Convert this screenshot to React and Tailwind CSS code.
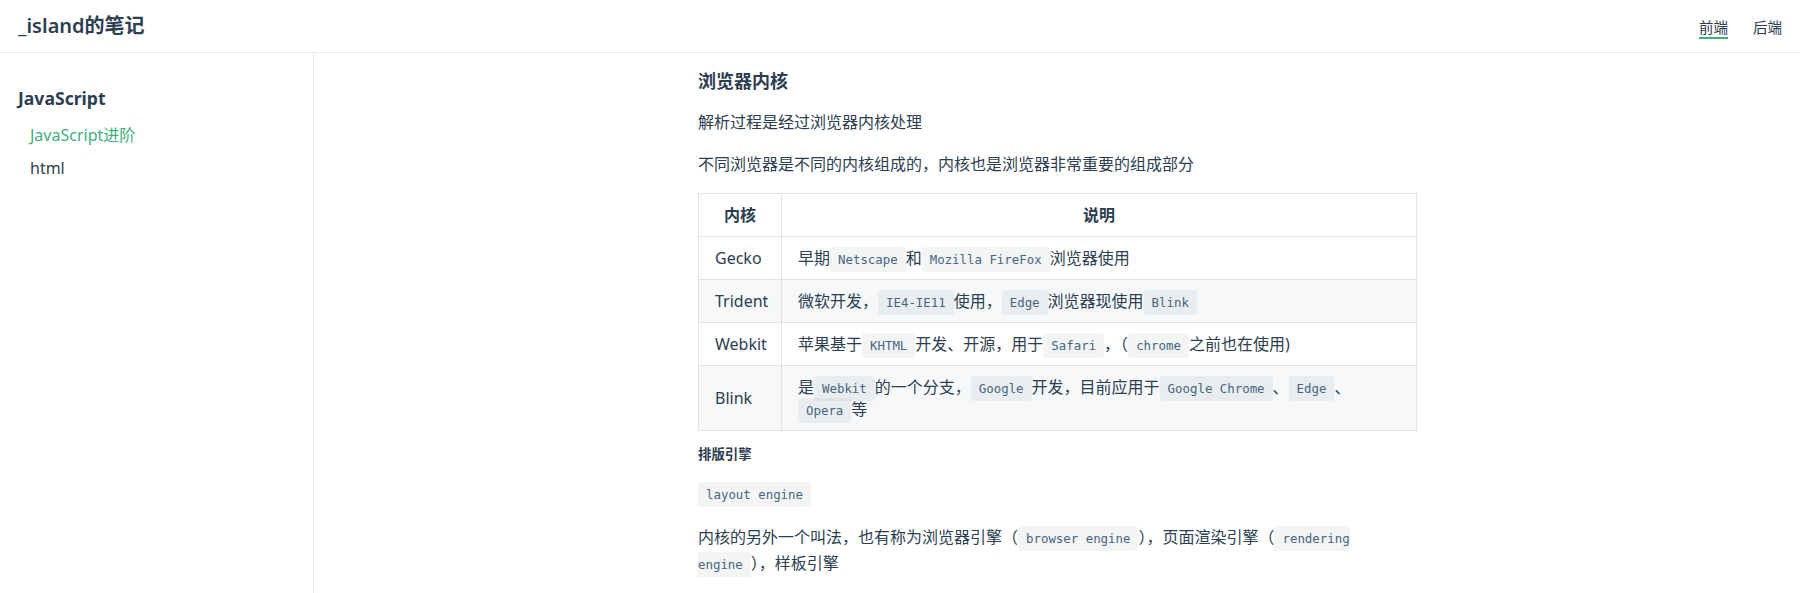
const Code = ({ children, className = "" }) => (
  <code
    className={`font-['DejaVu_Sans_Mono',monospace] text-[12.4px] leading-none text-[#476582] bg-[rgba(27,31,35,0.05)] rounded-[3px] px-[8px] py-[5px] ${className}`}
  >
    {children}
  </code>
);

const rows = [
  {
    name: "Gecko",
    desc: (
      <>
        早期<Code>Netscape</Code>和<Code>Mozilla FireFox</Code>浏览器使用
      </>
    ),
  },
  {
    name: "Trident",
    desc: (
      <>
        微软开发，<Code>IE4-IE11</Code>使用，<Code>Edge</Code>浏览器现使用<Code>Blink</Code>
      </>
    ),
  },
  {
    name: "Webkit",
    desc: (
      <>
        苹果基于<Code>KHTML</Code>开发、开源，用于<Code>Safari</Code>，（<Code>chrome</Code>之前也在使用)
      </>
    ),
  },
  {
    name: "Blink",
    desc: (
      <>
        是<Code>Webkit</Code>的一个分支，<Code>Google</Code>开发，目前应用于<Code>Google Chrome</Code>、<Code>Edge</Code>、
        <br />
        <Code>Opera</Code>等
      </>
    ),
  },
];

export default function App() {
  return (
    <div className="min-h-screen bg-white text-[#2c3e50] font-['Noto_Sans','Noto_Sans_CJK_SC',sans-serif]">
      {/* top bar */}
      <header className="h-[53px] border-b border-[#eaecef] flex items-center justify-between px-[18px]">
        <span className="text-[20px] font-semibold leading-[26px]">_island的笔记</span>
        <nav className="flex items-center gap-[25px] text-[14.5px] mt-[3px]">
          <a className="leading-[20px] border-b-2 border-[#3eaf7c]">前端</a>
          <a className="leading-[20px] border-b-2 border-transparent">后端</a>
        </nav>
      </header>

      <div className="flex">
        <aside className="w-[314px] shrink-0 border-r border-[#eaecef] min-h-[540px] pt-[33px]">
          <div className="px-[18px] text-[17.6px] font-bold leading-[24px]">JavaScript</div>
          <ul className="mt-[9px] text-[16px] leading-[22px]">
            <li className="pl-[30px] py-[5px] text-[#3eaf7c]">JavaScript进阶</li>
            <li className="pl-[30px] py-[5px] mt-[1px]">html</li>
          </ul>
        </aside>

        <main className="flex-1 min-w-0">
          <div className="w-[720px] mx-auto pl-[1px] text-[16px] leading-[26px]">
            <h3 className="mt-[16px] text-[18px] font-bold leading-[24px]">浏览器内核</h3>
            <p className="mt-[16px]">解析过程是经过浏览器内核处理</p>
            <p className="mt-[16px]">不同浏览器是不同的内核组成的，内核也是浏览器非常重要的组成部分</p>

            <table className="mt-[16px] w-full table-fixed border-collapse leading-[22px]">
              <colgroup>
                <col className="w-[83px]" />
                <col />
              </colgroup>
              <thead>
                <tr>
                  <th className="border border-[#dfe2e5] py-[10px] font-bold text-center">内核</th>
                  <th className="border border-[#dfe2e5] py-[10px] font-bold text-center">说明</th>
                </tr>
              </thead>
              <tbody>
                {rows.map((r, i) => (
                  <tr key={r.name} className={i % 2 === 1 ? "bg-[#f6f8fa]" : ""}>
                    <td className="border border-[#dfe2e5] px-[16px] py-[10px]">{r.name}</td>
                    <td className="border border-[#dfe2e5] px-[16px] py-[10px]">{r.desc}</td>
                  </tr>
                ))}
              </tbody>
            </table>

            <h6 className="mt-[14px] text-[13.4px] font-bold leading-[18px]">排版引擎</h6>
            <p className="mt-[17px]">
              <Code>layout engine</Code>
            </p>
            <p className="mt-[18px]">
              内核的另外一个叫法，也有称为浏览器引擎（<Code>browser engine</Code>），页面渲染引擎（
              <Code className="rounded-r-none pr-0">rendering</Code>
              <br />
              <Code className="rounded-l-none pl-0">engine</Code>），样板引擎
            </p>
          </div>
        </main>
      </div>
    </div>
  );
}
